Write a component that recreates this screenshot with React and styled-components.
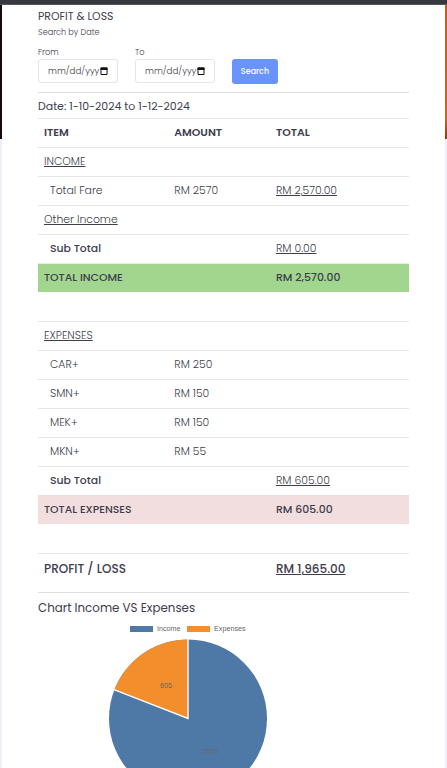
import React from 'react';
import styled, { createGlobalStyle } from 'styled-components';

const GlobalStyle = createGlobalStyle`
  * { box-sizing: border-box; }
  body {
    margin: 0;
    overflow: hidden;
    background: #eef0f8;
    color: #403d4d;
    font-family: Poppins, Inter, "Open Sans", sans-serif;
    font-size: 10.8px;
  }
`;

const Page = styled.div`
  height: 768px;
  overflow: hidden;
  display: flex;
  flex-direction: column;
`;

const TopBar = styled.div`
  flex: none;
  height: 5px;
  background: #37383e;
  border-bottom: 1px solid #55565b;
`;

const Body = styled.div`
  flex: 1;
  min-height: 0;
  display: flex;
`;

const Edge = styled.div`
  width: 2px;
  height: 134px;
  background: ${(p) => p.$fill};
`;

const Card = styled.main`
  flex: 1;
  padding: 0 36px;
  background: #fff;
`;

const Text = styled.span`
  display: inline-block;
  white-space: nowrap;
  text-decoration: ${(p) => (p.$underline ? 'underline' : 'none')};
  text-underline-offset: 1px;
  text-decoration-thickness: 1px;
`;

const Title = styled.h1`
  margin: 0;
  padding-top: 3px;
  font-size: 10.9px;
  font-weight: 400;
  line-height: 17px;
`;

const Subtitle = styled.p`
  margin: 0;
  font-size: 8.1px;
  font-weight: 300;
  line-height: 15px;
`;

const Form = styled.form`
  display: flex;
  align-items: flex-end;
  height: 53px;
  padding: 5px 0 9px;
  border-bottom: 1px solid #dfdfe2;
`;

const Field = styled.label`
  width: 80px;
  margin-right: 17px;
  font-size: 8.2px;
  font-weight: 300;
  line-height: 13px;
`;

const DateBox = styled.div`
  display: flex;
  align-items: center;
  justify-content: space-between;
  height: 24px;
  padding: 0 9px;
  border: 1px solid #e2e5ec;
  border-radius: 3px;
  font-size: 8.7px;
`;

const SearchButton = styled.button`
  width: 46px;
  height: 25px;
  margin-bottom: -1px;
  padding: 0;
  border: 0;
  border-radius: 3px;
  background: #6993ff;
  color: #fff;
  font: 500 8px Poppins, Inter, sans-serif;
`;

const DateRange = styled.p`
  margin: 0;
  height: 25px;
  font-size: 10.95px;
  line-height: 27px;
`;

const Row = styled.div`
  display: grid;
  grid-template-columns: 130.3px 101.7px 1fr;
  height: ${(p) => (p.$big ? 39 : 29)}px;
  padding-top: ${(p) => (p.$big ? 1 : 0)}px;
  border-top: 1px solid ${(p) => (p.$blank ? 'transparent' : p.$line || '#e6e6ea')};
  background: ${(p) => p.$fill || 'transparent'};
  background-clip: padding-box;
  font-size: ${(p) => (p.$big ? 12 : 10.85)}px;
  line-height: 27px;
`;

const Cell = styled.div`
  padding-left: ${(p) => (p.$indent ? 12 : 6)}px;
  font-weight: ${(p) => p.$weight || 300};
`;

const ChartTitle = styled.h2`
  margin: 0;
  border-top: 1px solid #dfdfe2;
  font-size: 11.85px;
  font-weight: 400;
  line-height: 30px;
`;

const Chart = styled.div`
  width: 300px;
  font-family: "Liberation Sans", Arial, sans-serif;
`;

const Legend = styled.div`
  display: flex;
  align-items: center;
  height: 11px;
  padding-left: 92px;
  color: #666;
  font-size: 7.2px;
`;

const Swatch = styled.span`
  width: 23px;
  height: 6px;
  margin-right: 4px;
  background: ${(p) => p.$fill};
`;

const LegendLabel = styled.span`
  width: ${(p) => p.$width}px;
`;

const rows = [
  { item: 'ITEM', amount: 'AMOUNT', total: 'TOTAL', weight: 600 },
  { item: 'INCOME', heading: true },
  { item: 'Total Fare', amount: 'RM 2570', total: 'RM 2,570.00', sum: true, indent: true },
  { item: 'Other Income', heading: true },
  { item: 'Sub Total', total: 'RM 0.00', sum: true, indent: true, itemWeight: 500 },
  { item: 'TOTAL INCOME', total: 'RM 2,570.00', weight: 500, fill: '#a2d58d', line: '#e5eee1' },
  { blank: true },
  { item: 'EXPENSES', heading: true },
  { item: 'CAR+', amount: 'RM 250', indent: true },
  { item: 'SMN+', amount: 'RM 150', indent: true },
  { item: 'MEK+', amount: 'RM 150', indent: true },
  { item: 'MKN+', amount: 'RM 55', indent: true },
  { item: 'Sub Total', total: 'RM 605.00', sum: true, indent: true, itemWeight: 500 },
  { item: 'TOTAL EXPENSES', total: 'RM 605.00', weight: 500, fill: '#f2dede', line: '#eedddd' },
  { blank: true },
  { item: 'PROFIT / LOSS', total: 'RM 1,965.00', sum: true, weight: 500, big: true },
];

const DateInput = ({ label }) => (
  <Field>
    {label}
    <DateBox>
      <Text>mm/dd/yyy</Text>
      <svg width="8" height="8" viewBox="0 0 8 8">
        <path d="M1 1H7V7.5H1Z" fill="none" stroke="#111" />
        <path d="M.5 .5H7.5V3H.5Z" fill="#111" />
      </svg>
    </DateBox>
  </Field>
);

const Pie = () => (
  <svg width="300" height="134" viewBox="38 634 300 134">
    <circle cx="188" cy="718.5" r="79" fill="#4e79a7" />
    <path d="M188 718.5L114.4 689.7A79 79 0 0 1 188 639.5Z" fill="#f28e2b" />
    <path d="M188 639V718.5L114 689.6" fill="none" stroke="#fff" strokeWidth="1.4" />
    <text x="166" y="688" fontSize="7.2" textAnchor="middle" fill="#666">605</text>
    <text x="210.5" y="754" fontSize="7.2" textAnchor="middle" fill="#666">2570</text>
  </svg>
);

const App = () => {
  return (
    <Page>
      <GlobalStyle />
      <TopBar />
      <Body>
        <Edge $fill="#1b0510" />
        <Card>
          <Title><Text>PROFIT &amp; LOSS</Text></Title>
          <Subtitle><Text>Search by Date</Text></Subtitle>
          <Form>
            <DateInput label="From" />
            <DateInput label="To" />
            <SearchButton type="button">Search</SearchButton>
          </Form>
          <DateRange><Text>Date: 1-10-2024 to 1-12-2024</Text></DateRange>
          {rows.map((row, i) => (
            <Row key={i} $blank={row.blank} $fill={row.fill} $line={row.line} $big={row.big}>
              <Cell $indent={row.indent} $weight={row.itemWeight || row.weight}>
                <Text $underline={row.heading}>{row.item}</Text>
              </Cell>
              <Cell $weight={row.weight}><Text>{row.amount}</Text></Cell>
              <Cell $weight={row.weight}><Text $underline={row.sum}>{row.total}</Text></Cell>
            </Row>
          ))}
          <ChartTitle><Text>Chart Income VS Expenses</Text></ChartTitle>
          <Chart>
            <Legend>
              <Swatch $fill="#4e79a7" />
              <LegendLabel $width={30}>Income</LegendLabel>
              <Swatch $fill="#f28e2b" />
              <LegendLabel $width={34}>Expenses</LegendLabel>
            </Legend>
            <Pie />
          </Chart>
        </Card>
        <Edge $fill="linear-gradient(#c95a1c 0%, #cf6322 85%, #8a3a10 100%)" />
      </Body>
    </Page>
  );
};

export default App;
